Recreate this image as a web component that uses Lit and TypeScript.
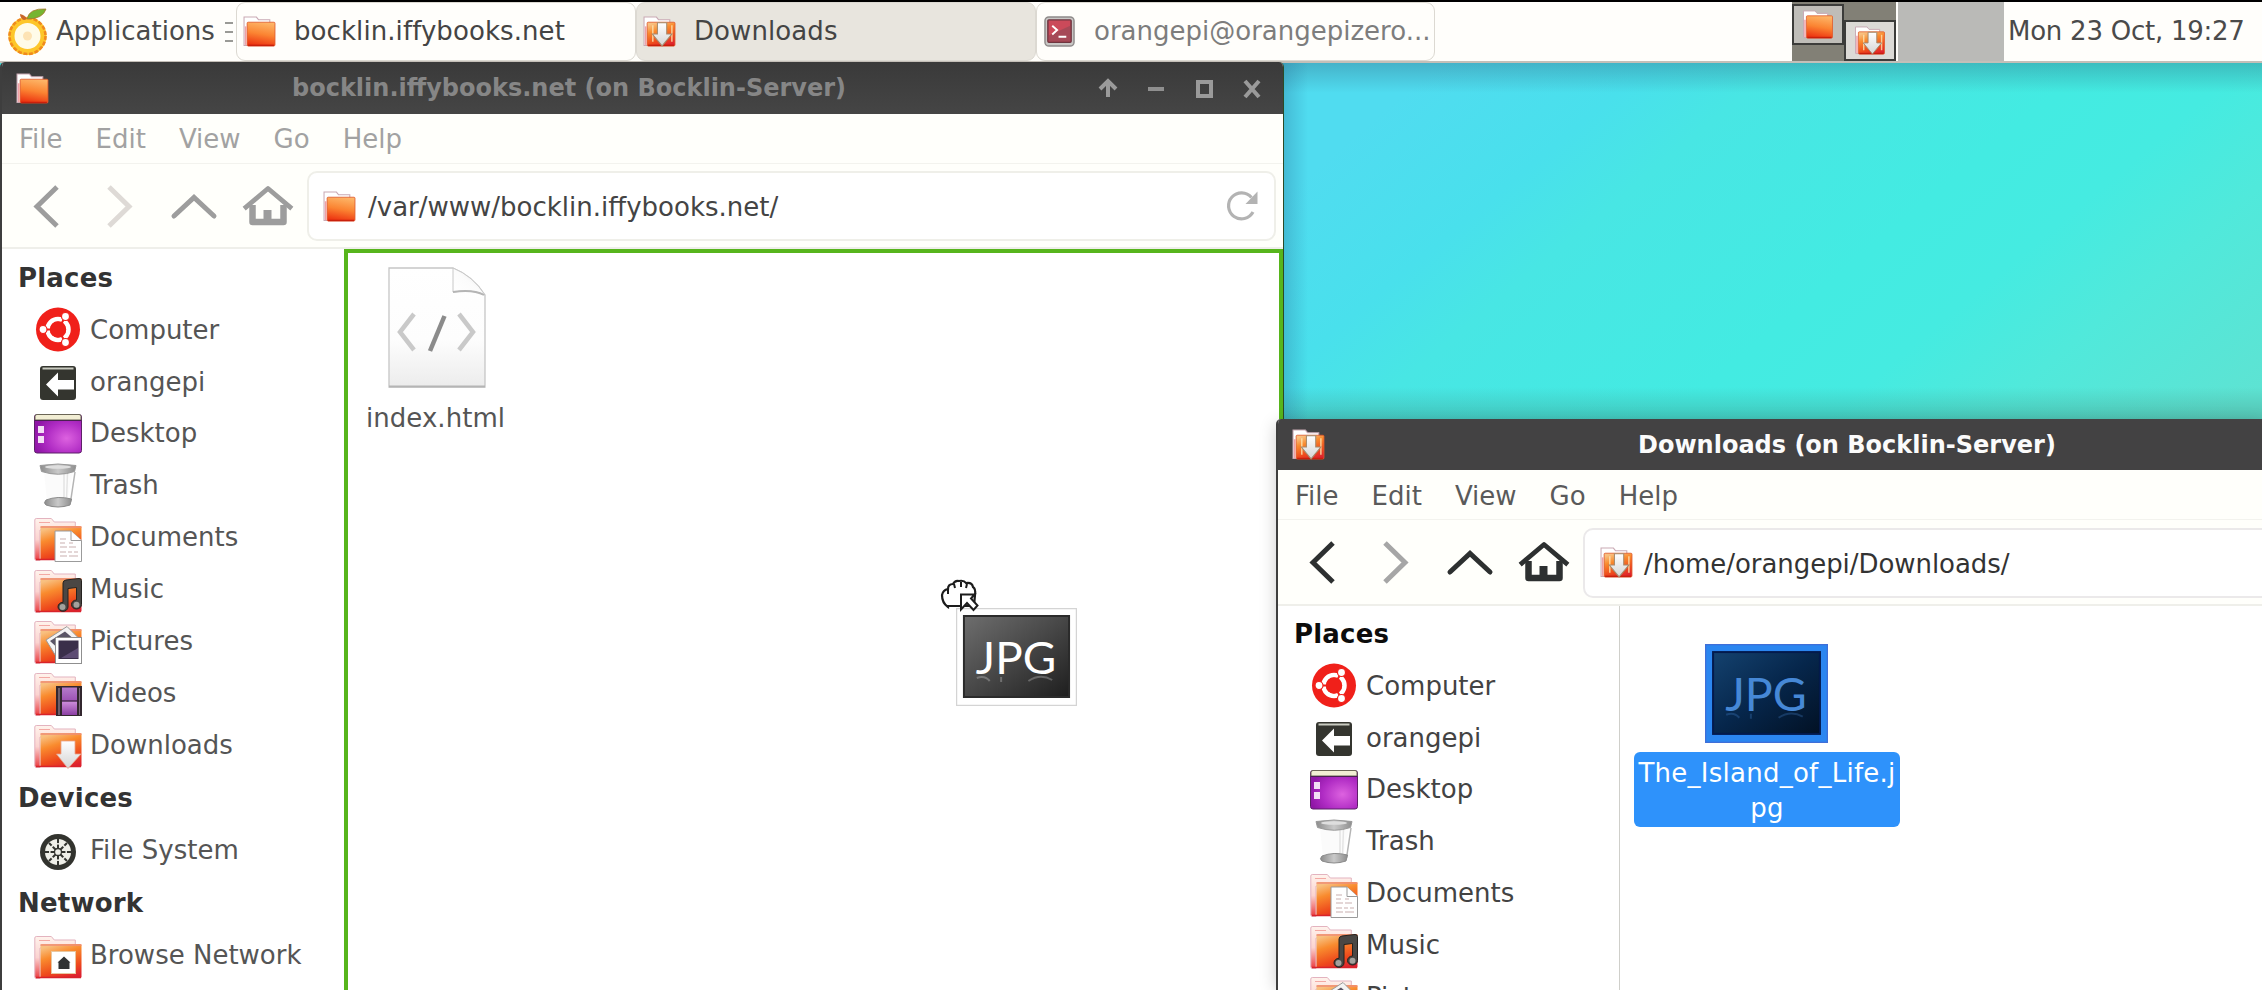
import { LitElement, html, svg, css, nothing } from "lit";
import { customElement, property } from "lit/decorators.js";

/* ---------- icons ---------- */

const gradients = svg`
  <defs>
    <linearGradient id="fold" x1="0.6" y1="0" x2="0.4" y2="1">
      <stop offset="0" stop-color="#fdb567" /><stop offset="0.5" stop-color="#fb8432" /><stop offset="1" stop-color="#ec3210" />
    </linearGradient>
    <linearGradient id="warm" x1="0.35" y1="0" x2="0.75" y2="1">
      <stop offset="0" stop-color="#f8c080" /><stop offset="0.3" stop-color="#f98b2e" /><stop offset="0.7" stop-color="#ee4a1c" /><stop offset="1" stop-color="#dd2030" />
    </linearGradient>
    <linearGradient id="back" x1="0" y1="0" x2="0" y2="1">
      <stop offset="0" stop-color="#fff3ec" /><stop offset="0.5" stop-color="#fbd3d0" /><stop offset="1" stop-color="#ea3a3e" />
    </linearGradient>
    <linearGradient id="arrow" x1="0" y1="0" x2="0" y2="1">
      <stop offset="0" stop-color="#ffffff" /><stop offset="1" stop-color="#d4d4d4" />
    </linearGradient>
    <radialGradient id="desk" cx="0.68" cy="0.62" r="0.7">
      <stop offset="0" stop-color="#dd62e0" /><stop offset="0.6" stop-color="#b02cc4" /><stop offset="1" stop-color="#8f16a6" />
    </radialGradient>
    <linearGradient id="film" x1="0" y1="0" x2="0" y2="1">
      <stop offset="0" stop-color="#b57ccb" /><stop offset="0.48" stop-color="#9d52b4" /><stop offset="0.5" stop-color="#cf8fdd" /><stop offset="1" stop-color="#8b3fa3" />
    </linearGradient>
    <linearGradient id="metal" x1="0" y1="0" x2="1" y2="0">
      <stop offset="0" stop-color="#8c8c8c" /><stop offset="0.5" stop-color="#c9c9c9" /><stop offset="1" stop-color="#8e8e8e" />
    </linearGradient>
  </defs>`;

/* 32-unit folder used in bars */
const smallFolder = (down = false) => svg`
  <svg class="ico" viewBox="0 0 32 30">
    ${gradients}
    <path d="M1 1h12l2 2.500h11v5H5v20H1z" fill="#fff" stroke="#c9a9b4" stroke-width="1" />
    <path d="M2.500 10v18" stroke="#f0a0a8" stroke-width="1.500" />
    <rect x="4" y="6" width="27" height="23" rx="1" fill=${down ? "url(#warm)" : "url(#fold)"} stroke="#e0582a" stroke-width="0.800" />
    <path d="M5 28.500h25" stroke="#c9200c" stroke-width="1.500" />
    ${down
      ? svg`<path d="M9.500 9v16M28 9v16" fill="none" stroke="#fbe2b0" stroke-width="1.500" opacity=".8" />
            <path d="M14 6.500h9v11h5l-9.500 11.500L9 17.500h5z" fill="url(#arrow)" stroke="#a58a6c" stroke-width="1" />`
      : nothing}
  </svg>`;

const bigFolder = svg`
  <path d="M0.800 7q0-1.500 1.500-1.500h15l3 3.500h21v8H6v30.500H2.500q-1.700 0-1.700-1.700z" fill="url(#back)" stroke="#e3b3bf" stroke-width="1" />
  <path d="M5 9.500h11" stroke="#f3a9a4" stroke-width="1" />
  <rect x="6.500" y="13" width="41" height="34" rx="1.500" fill="url(#warm)" />
  <path d="M6.500 14h41" stroke="#ef8d76" stroke-width="1.500" />
  <path d="M2 46.500h45" stroke="#d8232a" stroke-width="1.500" />`;

const note = svg`
  <path d="M29 18q0-2.500 3-3l13-1.500q2.500 0 2.500 2v24a5 4.500 0 1 1-5-4.500V22.500l-8.500 1V42a5 4.500 0 1 1-5-4.700z" fill="#4a4744" stroke="#25221f" stroke-width="1" />
  <circle cx="28.500" cy="42" r="3" fill="#a3a19d" /><circle cx="42.500" cy="39.800" r="3" fill="#a3a19d" />`;

const placeArt: Record<string, unknown> = {
  Computer: svg`
    <circle cx="24" cy="24.500" r="22" fill="#f0201a" />
    <circle cx="24" cy="24.500" r="10.500" fill="none" stroke="#fff" stroke-width="4.500" />
    <g stroke="#f0201a" stroke-width="2"><path d="M24 24.500H6M24 24.500l8-14M24 24.500l8 14" fill="none" /></g>
    <circle cx="24" cy="24.500" r="8" fill="#f0201a" />
    <g fill="#fff" stroke="#f0201a" stroke-width="1.200"><circle cx="9" cy="24.500" r="4" /><circle cx="31.500" cy="11.500" r="4" /><circle cx="31.500" cy="37.500" r="4" /></g>`,
  orangepi: svg`
    <rect x="6" y="9" width="36" height="34" rx="3" fill="#34352f" />
    <path d="M8.500 11.500h31" stroke="#c9cbc0" stroke-width="2" />
    <path d="M12 27.500l12-12v7.500h16v9.500H24v7z" fill="#fff" />`,
  Desktop: svg`
    <rect x="0.500" y="5.500" width="47" height="38.500" rx="2.500" fill="url(#desk)" stroke="#5d2068" stroke-width="1" />
    <path d="M1 11V7.500q0-2 2-2h42q2 0 2 2V11z" fill="#f2eed4" stroke="#6b6656" stroke-width="1" />
    <path d="M1 11.500h46" stroke="#4a2150" stroke-width="1.200" />
    <path d="M4 17h6v7H4zM4 27h6v7H4z" fill="#f3dff5" />`,
  Trash: svg`
    <path d="M10 11l3 29h20l6-29z" fill="#fafafa" opacity=".7" />
    <path d="M30 12v27M33.500 12l-1 27" stroke="#e4e4e4" stroke-width="1.500" />
    <path d="M41 11l-4.500 30" stroke="#b4b4b4" stroke-width="1.500" />
    <path d="M6 4.500q18-3 36 0l-1.500 6q-16 5.500-33 0z" fill="url(#metal)" stroke="#9a9a9a" stroke-width="1" />
    <ellipse cx="24" cy="6" rx="13" ry="1.800" fill="#dedede" />
    <path d="M12 39q11.500-4.500 25.500-1l-1.500 6q-12 4-24 0-3-2 0-5z" fill="url(#metal)" stroke="#8a8a8a" stroke-width="1" />`,
  Documents: svg`${bigFolder}
    <path d="M21 18h16l10.500 9.500v21H21z" fill="#fff" stroke="#9b9b9b" stroke-width="1" />
    <path d="M37 18v9.500h10.500" fill="#fff" stroke="#9b9b9b" stroke-width="1" />
    <path d="M26 26h6M26 30h5M35 30h4M26 34h7M35 34h7M26 39h6M34 39h4M40 39h4M26 43h7M35 43h9" stroke="#c9b0b0" stroke-width="1.200" />`,
  Music: svg`${bigFolder}${note}`,
  Pictures: svg`${bigFolder}
    <path d="M12 24l21-13.500 11 11-20 22z" fill="#f4f4f4" stroke="#9b9b9b" stroke-width="1" />
    <path d="M16 25l15-9.500 7 6-15 10z" fill="#5a5566" />
    <rect x="21.500" y="21.500" width="26" height="26" fill="#fff" stroke="#8f8f8f" stroke-width="1" />
    <rect x="24.500" y="24.500" width="20" height="18.500" fill="#3a2f4a" /><path d="M27 42l17-10v10z" fill="#6d5a86" opacity=".7" />`,
  Videos: svg`${bigFolder}
    <rect x="22" y="18" width="26" height="30" fill="#33272f" />
    <rect x="28" y="19.500" width="15" height="27.500" fill="url(#film)" />
    <path d="M28 33h15" stroke="#3c2442" stroke-width="1.300" />
    <path d="M25 20v27" stroke="#8c7c8a" stroke-width="1.300" /><path d="M45.500 20v27" stroke="#7d6d7b" stroke-width="1" />`,
  Downloads: svg`${bigFolder}
    <path d="M27 21h14v13h6L34 48.500 22.500 34H27z" fill="url(#arrow)" stroke="#e9a28a" stroke-width="0.800" />`,
  "File System": svg`
    <circle cx="24" cy="26" r="18" fill="#32332e" />
    <circle cx="24" cy="26" r="13" fill="#efefe8" />
    <path d="M24 13v26M11 26h26M15 17l18 18M33 17L15 35" stroke="#32332e" stroke-width="2" />
    <circle cx="24" cy="26" r="8.300" fill="none" stroke="#efefe8" stroke-width="1.500" />
    <circle cx="24" cy="26" r="3.500" fill="#efefe8" stroke="#32332e" stroke-width="1.300" />`,
  "Browse Network": svg`${bigFolder}
    <rect x="17.500" y="20.500" width="24" height="22" fill="#fff" stroke="#e8c7a0" stroke-width="1" />
    <path d="M23.500 31.500l6.500-6 6.500 6h-1v6.500H24.500v-6.500z" fill="#2f3233" />`,
};

const placeIcon = (name: string) => html`
  <svg class="place-ico" viewBox="0 0 48 49">${gradients}${placeArt[name]}</svg>`;

const jpgIcon = (selected: boolean) => {
  const id = selected ? "jpg-selected" : "jpg-plain";
  return html`
  <svg class="jpg" viewBox="0 0 122 98" preserveAspectRatio="none">
    <defs>
      <linearGradient id=${id} x1="0" y1="0" x2="1" y2="1">
        <stop offset="0" stop-color=${selected ? "#14426f" : "#6e6e6e"} />
        <stop offset="0.500" stop-color=${selected ? "#06264b" : "#474747"} />
        <stop offset="1" stop-color=${selected ? "#021124" : "#1e1e1e"} />
      </linearGradient>
    </defs>
    <rect x="0.500" y="0.500" width="121" height="97" fill=${selected ? "#2b86f0" : "#ffffff"} stroke=${selected ? "#3f6fd8" : "#d4d4d4"} stroke-width="1.500" />
    <rect x="8" y="8" width="106" height="81" fill=${`url(#${id})`} stroke=${selected ? "#031a4d" : "#2b2b2b"} stroke-width="2" />
    <text class="jtext" x="20" y="66" textLength="81" lengthAdjust="spacingAndGlyphs" fill=${selected ? "#4688d6" : "#ffffff"}>JPG</text>
    <g opacity=".25" fill="none" stroke=${selected ? "#4f93e4" : "#ffffff"} stroke-width="2">
      <path d="M21 70q8-3 13 3M45.500 69v5M73 73q12-8 24-1" />
    </g>
  </svg>`;
};

const terminalIcon = svg`
  <svg class="ico" viewBox="0 0 32 32">
    <rect x="1" y="1" width="30" height="30" rx="4" fill="#c9c7c5" stroke="#8f8b8b" stroke-width="1.500" />
    <rect x="4" y="4" width="24" height="23" rx="1" fill="#cb4a5a" stroke="#6f3640" stroke-width="1.500" />
    <path d="M5 20l22-10v16H5z" fill="#8e4a55" opacity=".6" />
    <path d="M8.500 10l5 4.500-5 4.500M15 21.500h8" fill="none" stroke="#fff" stroke-width="2" />
  </svg>`;

const orangeIcon = svg`
  <svg class="orange" viewBox="0 0 40 48">
    <circle cx="19.500" cy="28" r="16" fill="#fffbe8" stroke="#fdc62a" stroke-width="6" />
    <circle cx="19.500" cy="28" r="18" fill="none" stroke="#f08a1e" stroke-width="2.600" stroke-dasharray="4 1.650" />
    <circle cx="19.500" cy="28" r="4.500" fill="#fde3b4" />
    <path d="M16 12q-4-2-4-6 5 1 7 5z" fill="#c9662a" />
    <path d="M19 11q2-11 19-10-3 10-19 10z" fill="#76b531" stroke="#a9762b" stroke-width="0.800" />
  </svg>`;

/* ---------- data ---------- */

const sections = [
  { title: "Places", items: ["Computer", "orangepi", "Desktop", "Trash", "Documents", "Music", "Pictures", "Videos", "Downloads"] },
  { title: "Devices", items: ["File System"] },
  { title: "Network", items: ["Browse Network"] },
];
const menus = ["File", "Edit", "View", "Go", "Help"];

const shared = css`
  * { box-sizing: border-box; }
  .ico { display: block; width: 33px; height: 31px; flex: none; }
`;

/* ---------- file manager window ---------- */

@customElement("file-window")
class FileWindow extends LitElement {
  @property() heading = "";
  @property() path = "";
  @property({ type: Boolean, reflect: true }) active = false;
  @property({ type: Boolean }) downloads = false;

  static styles = [shared, css`
    :host {
      display: flex; flex-direction: column; box-sizing: border-box; overflow: hidden;
      border-left: 2px solid #3e3e3e; background: #fff; border-radius: 5px 5px 0 0;
      --ink: #555; --head: #333; --menu: #a2a2a2; --tool: #9d9d9d; --dim: #dedad6; --path: #444;
    }
    :host([active]) { --ink: #434343; --head: #0c0c0c; --menu: #5a5a5a; --tool: #2d3030; --dim: #a6a6a6; --path: #333; }
    .title {
      flex: none; height: 52px; display: flex; align-items: center; padding-left: 14px;
      background: linear-gradient(#3a3a3a, #454545); color: #868686; font-weight: bold;
      font-size: 24px; white-space: pre;
    }
    :host([active]) .title { height: 51px; background: #434243; color: #fbfbfb; padding-left: 14px; }
    .caption { flex: none; margin-left: 243px; width: 804px; }
    :host([active]) .caption { margin-left: 313px; width: auto; }
    .controls { display: flex; gap: 24px; }
    .controls svg { width: 24px; height: 24px; }
    .menu { flex: none; height: 50px; display: flex; gap: 33px; align-items: center; padding: 1px 0 0 17px; color: var(--menu); background: #fffffb; border-bottom: 1px solid #f3f3ee; }
    :host([active]) .menu { padding-top: 2px; }
    .tools { flex: none; height: 85px; display: flex; align-items: center; background: #fffffb; border-bottom: 2px solid #efefea; }
    :host([active]) .tools { height: 86px; }
    .nav { flex: none; width: 305px; height: 60px; display: block; }
    .entry { flex: 1; height: 70px; margin-right: 7px; margin-top: 1px; display: flex; align-items: center; border: 2px solid #efefe9; border-radius: 10px; background: #fff; padding: 0 15px 0 14px; color: var(--path); }
    :host([active]) .entry { margin-right: -20px; border-color: #ebe9ea; padding-left: 15px; }
    .entry span { flex: 1; margin-left: 12px; padding-top: 2px; }
    :host([active]) .entry span { margin-left: 11px; letter-spacing: -0.05px; }
    .reload { width: 36px; height: 36px; margin-right: -1px; }
    .body { flex: 1; min-height: 0; display: flex; }
    .side { flex: none; width: 342px; padding-top: 2.800px; overflow: hidden; color: var(--ink); }
    .head, .place { height: 51.9px; display: flex; align-items: center; }
    .head { padding-left: 16px; font-weight: bold; color: var(--head); letter-spacing: 0.2px; }
    .group + .group { margin-top: 1.500px; }
    .place { padding-left: 32px; gap: 8px; }
    .place-ico { display: block; width: 48px; height: 49px; }
    .pane { flex: 1; border: 4px solid #57b51c; border-bottom: 0; background: #fff; }
    :host([active]) .side { width: 341px; padding-top: 1.800px; }
    :host([active]) .pane { border: 0; border-left: 1px solid #cfcfca; }
  `];

  render() {
    return html`
      <div class="title">
        ${smallFolder(this.downloads)}<span class="caption">${this.heading}</span>
        ${this.active ? nothing : html`
          <span class="controls">
            <svg viewBox="0 0 24 24"><path d="M12 21V5M4 13l8-8 8 8" fill="none" stroke="#9a9a9a" stroke-width="4" /></svg>
            <svg viewBox="0 0 24 24"><path d="M4 13h16" stroke="#8f8f8f" stroke-width="4" /></svg>
            <svg viewBox="0 0 24 24"><rect x="6" y="6" width="13" height="14" fill="none" stroke="#9a9a9a" stroke-width="4" /></svg>
            <svg viewBox="0 0 24 24"><path d="M5 5l14 16M19 5L5 21" stroke="#9a9a9a" stroke-width="4" /></svg>
          </span>`}
      </div>
      <div class="menu">${menus.map((m) => html`<span>${m}</span>`)}</div>
      <div class="tools">
        <svg class="nav" viewBox="0 0 305 60" fill="none" stroke="var(--tool)" stroke-width="5">
          <path d="M55 11L35 30.500 55 50" />
          <path d="M107 11l20 19.500L107 50" stroke="var(--dim)" />
          <path d="M172 40l20-18.500L212 40" stroke-linecap="round" />
          <path d="M244 31l22-18.500L288 31" stroke-linejoin="round" stroke-linecap="square" stroke-width="4.800" />
          <path d="M250.500 29v17h31V29" stroke-width="6.500" stroke-linejoin="round" />
          <path d="M261.500 48V34h8v14z" fill="var(--tool)" stroke="none" />
        </svg>
        <div class="entry">
          ${smallFolder(this.downloads)}<span>${this.path}</span>
          ${this.active ? nothing : html`
            <svg class="reload" viewBox="0 0 36 36" fill="none" stroke="#b3b3b3">
              <path d="M29 24A13 13 0 1 1 27.500 9.500" stroke-width="3.200" />
              <path d="M33.500 3.500V16H21.500z" fill="#b3b3b3" stroke="none" />
            </svg>`}
        </div>
      </div>
      <div class="body">
        <div class="side">
          ${sections.map((s) => html`
            <div class="group">
              <div class="head">${s.title}</div>
              ${s.items.map((i) => html`<div class="place">${placeIcon(i)}<span>${i}</span></div>`)}
            </div>`)}
        </div>
        <div class="pane"><slot></slot></div>
      </div>`;
  }
}

/* ---------- desktop ---------- */

@customElement("app-root")
class AppRoot extends LitElement {
  static styles = [shared, css`
    :host {
      display: block; position: relative; width: 2262px; height: 990px; overflow: hidden;
      font-family: "DejaVu Sans", sans-serif; font-size: 26px; line-height: 30px; white-space: nowrap;
      background: #45e6e2;
    }
    .panel { height: 63px; display: flex; background: #fffefb; border-top: 2px solid #000; border-bottom: 2px solid #c4bfb8; }
    .apps { width: 236px; display: flex; align-items: center; padding-left: 8px; color: #4a4a4a; }
    .orange { width: 40px; height: 48px; flex: none; }
    .apps span { margin-left: 8px; padding-bottom: 1px; }
    .grip { width: 8px; height: 20px; margin-left: 10px; background: repeating-linear-gradient(#9a9a96 0 2px, transparent 2px 9px); }
    .task { display: flex; align-items: center; gap: 18px; padding: 0 0 1px 6px; border: 1px solid #dcd9d2; border-radius: 9px; width: 400px; color: #444; }
    .task span { letter-spacing: 0.08px; padding-bottom: 1px; }
    .task.on { background: #e8e5de; }
    .task.mini { color: #7d7d7d; width: 399px; overflow: hidden; }
    .task.mini span { letter-spacing: 0; }
    .pager { margin-left: 357px; width: 104px; display: grid; grid-template-columns: 52px 52px; background: #828076; }
    .thumb { width: 52px; height: 41px; border: 2px solid #3c3c3a; background: #bfbdb8; display: flex; align-items: center; justify-content: center; margin-top: 2px; }
    .thumb.on { background: #dcdad6; margin-top: 18px; }
    .thumb .ico { width: 34px; height: 29px; }
    .idle { width: 106px; margin-left: 2px; background: #babab7; }
    .clock { margin-left: 4px; display: flex; align-items: center; padding-bottom: 1px; color: #4a4a4a; letter-spacing: -0.25px; }
    .wall { margin-left: 1270px; height: 358px; background:
      linear-gradient(90deg, rgba(40,110,150,.3) 14px, transparent 38px),
      linear-gradient(rgba(40,70,100,.28), transparent 30px),
      linear-gradient(0deg, rgba(60,110,90,.3), transparent 34px),
      linear-gradient(140deg, #50dcf0 12%, #49e0ec 27%, #48e6e4 36%, #43ebe2 58%, #45ebe1 69%, #50e9db 80%, #5de3d3 97%); }
    .win { position: absolute; }
    .one { left: 0; top: 62px; width: 1284px; height: 928px; border-right: 1px solid #2c4a26; }
    .two { left: 1276px; top: 419px; width: 986px; height: 571px; border-radius: 5px 0 0 0; }
    .shade { position: absolute; left: 1276px; top: 424px; width: 986px; height: 566px; box-shadow: 0 0 16px rgba(0,0,0,.2); }
    .file { width: 175px; padding-top: 14px; display: flex; flex-direction: column; align-items: center; color: #555; }
    .page { width: 98px; height: 121px; display: block; margin-left: 2px; }
    .file span { margin-top: 15px; letter-spacing: 0.05px; }
    .picked { width: 266px; margin: 38px 0 0 14px; display: flex; flex-direction: column; align-items: center; }
    .jpg { display: block; width: 121px; height: 98px; }
    .picked .jpg { width: 123px; height: 99px; margin-left: -1px; }
    .label { width: 266px; height: 75px; margin-top: 9px; background: #2e92fb; border-radius: 6px; color: #fff; text-align: center; line-height: 34.500px; padding-top: 4px; letter-spacing: 0.25px; }
    .drag { position: absolute; left: 955.500px; top: 608px; }
    .cursor { position: absolute; left: 940px; top: 578px; width: 40px; height: 36px; }
    .jtext { font-family: Lato, sans-serif; font-size: 45px; font-weight: 400; }
  `];

  render() {
    return html`
      <div class="panel">
        <div class="apps">${orangeIcon}<span>Applications</span><i class="grip"></i></div>
        <div class="task">${smallFolder()}<span>bocklin.iffybooks.net</span></div>
        <div class="task on">${smallFolder(true)}<span>Downloads</span></div>
        <div class="task mini">${terminalIcon}<span>orangepi@orangepizero...</span></div>
        <div class="pager">
          <div class="thumb">${smallFolder()}</div>
          <div class="thumb on">${smallFolder(true)}</div>
        </div>
        <div class="idle"></div>
        <div class="clock">Mon 23 Oct, 19:27</div>
      </div>
      <div class="wall"></div>

      <file-window class="win one" heading="bocklin.iffybooks.net (on Bocklin-Server)" path="/var/www/bocklin.iffybooks.net/">
        <div class="file">
          <svg class="page" viewBox="0 0 98 121">
            <defs>
              <linearGradient id="pg" x1="0" y1="0" x2="0" y2="1"><stop offset="0" stop-color="#fff" /><stop offset=".6" stop-color="#fdfdfd" /><stop offset="1" stop-color="#ececec" /></linearGradient>
              <linearGradient id="cl" x1="0" y1="1" x2="1" y2="0"><stop offset="0" stop-color="#fff" /><stop offset=".5" stop-color="#fbfbfb" /><stop offset="1" stop-color="#dcdcdc" /></linearGradient>
            </defs>
            <path d="M1 1h64q20 8 32 27v92H1z" fill="url(#pg)" stroke="#c6c6c6" stroke-width="1.300" />
            <path d="M1 119.500h96" stroke="#b5b5b5" stroke-width="1.800" />
            <path d="M65 1v24q20-3 32 3Q85 9 65 1z" fill="url(#cl)" stroke="#c8c8c8" stroke-width="1" />
            <path d="M65 25q20-3 31 3" fill="none" stroke="#b5b5b5" stroke-width="1.800" />
            <g fill="none" stroke-width="4.500"><path d="M26 47L12 65l14 18M71 47l14 18-14 18" stroke="#c9c9c9" /><path d="M56.500 49L42 84" stroke="#8b8b8b" /></g>
          </svg>
          <span>index.html</span>
        </div>
      </file-window>

      <div class="shade"></div>
      <file-window class="win two" active downloads heading="Downloads (on Bocklin-Server)" path="/home/orangepi/Downloads/">
        <div class="picked">
          ${jpgIcon(true)}
          <div class="label">The_Island_of_Life.j<br />pg</div>
        </div>
      </file-window>

      <div class="drag">${jpgIcon(false)}</div>
      <svg class="cursor" viewBox="0 0 40 36">
        <path d="M8 29q-6-4-6-12 1-5 6-6 0-5 5-5 2-4 6-3 5-1 7 2 6-1 7 4 3 2 2 8l-1 11H8z" fill="#fff" stroke="#1c1c1c" stroke-width="2.200" />
        <path d="M8 11v5M14 6l1 4M21 4v5M27 6l-1 4" stroke="#1c1c1c" stroke-width="2" />
        <path d="M21 16.500h13.500l-3.500 4 6.500 7-4 4.500-6.500-7-6 6.500z" fill="#fff" stroke="#1c1c1c" stroke-width="2" />
      </svg>`;
  }
}
